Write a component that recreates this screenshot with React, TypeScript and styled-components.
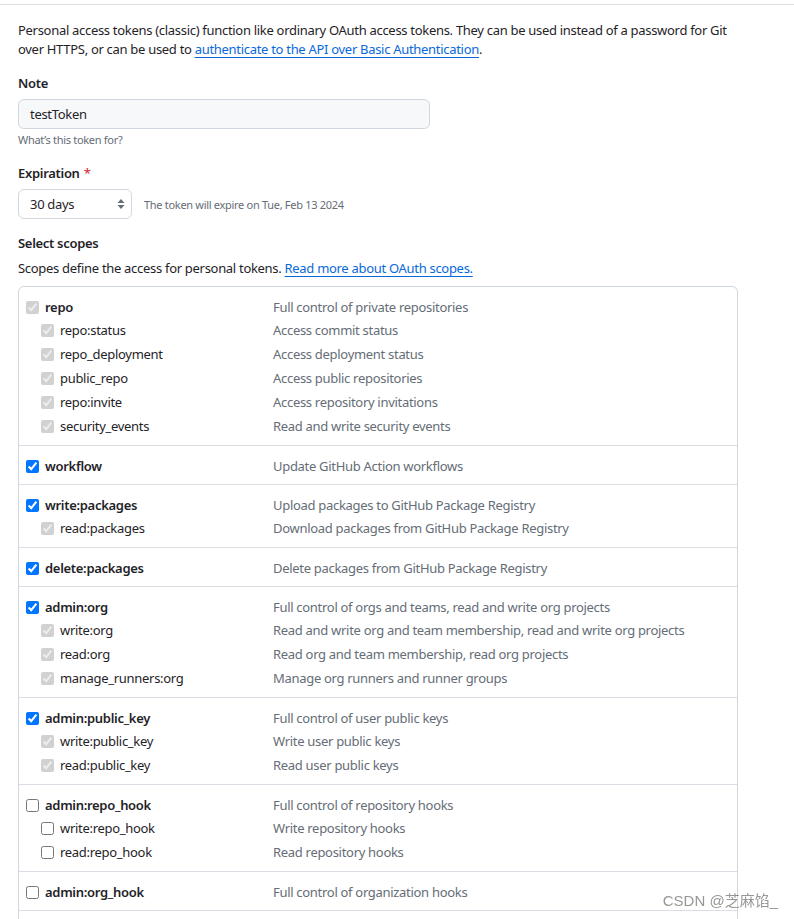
import React from "react";
import styled, { createGlobalStyle } from "styled-components";

const Global = createGlobalStyle`
  html, body { margin: 0; padding: 0; background: #ffffff; }
  body {
    font-family: "Noto Sans", "Liberation Sans", sans-serif;
    font-size: 13px;
    letter-spacing: -0.3px;
    color: #1f2328;
  }
  * { box-sizing: border-box; }
`;

const Rule = styled.div`
  margin-top: 4px;
  border-top: 1px solid #d8dee4;
`;

const Content = styled.div`
  padding: 16px 0 0 18px;
  width: 776px;
`;

const Intro = styled.p`
  margin: 0;
  line-height: 19px;
  width: 730px;
`;

const Link = styled.a`
  color: #0969da;
  text-decoration: underline;
  text-underline-offset: 3px;
`;

const Label = styled.div<{ $gap: number }>`
  margin-top: ${(p) => p.$gap}px;
  font-weight: 600;
  line-height: 20px;
`;

const Required = styled.span`
  color: #d1242f;
  margin-left: 4px;
  font-weight: 400;
`;

const TextInput = styled.input`
  display: block;
  margin-top: 6px;
  width: 412px;
  height: 30px;
  padding: 0 11px;
  border: 1px solid #d0d7de;
  border-radius: 6px;
  background: #f6f8fa;
  font: inherit;
  font-size: 13px;
  letter-spacing: -0.3px;
  color: #1f2328;
  outline: none;
`;

const Note = styled.div`
  margin-top: 2px;
  font-size: 11px;
  line-height: 18px;
  color: #656d76;
`;

const ExpireRow = styled.div`
  margin-top: 6px;
  display: flex;
  align-items: center;
  gap: 12px;
`;

const SelectWrap = styled.div`
  position: relative;
  width: 114px;
  height: 30px;
`;

const Select = styled.select`
  appearance: none;
  width: 100%;
  height: 100%;
  padding: 0 24px 0 11px;
  border: 1px solid #d0d7de;
  border-radius: 6px;
  background: #ffffff;
  font: inherit;
  font-size: 13px;
  letter-spacing: -0.3px;
  color: #1f2328;
  outline: none;
`;

const Arrows = styled.svg`
  position: absolute;
  right: 7px;
  top: 9px;
  pointer-events: none;
`;

const Hint = styled.span`
  font-size: 11px;
  color: #656d76;
`;

const ScopesText = styled.p`
  margin: 5px 0 0;
  line-height: 20px;
`;

const Box = styled.div`
  margin-top: 8px;
  width: 720px;
  border: 1px solid #d0d7de;
  border-radius: 6px;
`;

const Group = styled.div`
  padding: 8px 0 7px 7px;
  border-top: 1px solid #d8dee4;
  &:first-child { border-top: none; }
`;

const Row = styled.label<{ $top?: boolean }>`
  display: grid;
  grid-template-columns: 247px 1fr;
  height: ${(p) => (p.$top ? 23 : 24)}px;
  align-items: center;
`;

const Name = styled.span<{ $top?: boolean }>`
  display: flex;
  align-items: center;
  gap: 6px;
  padding-left: ${(p) => (p.$top ? 0 : 15)}px;
  font-weight: ${(p) => (p.$top ? 600 : 400)};
  color: #1f2328;
`;

const Box13 = styled.input`
  width: 13px;
  height: 13px;
  margin: 1px 0 0 0;
  flex: none;
`;

const Desc = styled.span`
  color: #656d76;
`;

const Watermark = styled.div`
  position: fixed;
  right: 16px;
  bottom: 8px;
  font-family: "Liberation Sans", "Noto Sans CJK SC", sans-serif;
  font-size: 15px;
  line-height: 20px;
  letter-spacing: 0;
  color: rgba(80, 80, 80, 0.6);
  pointer-events: none;
`;

type State = "on" | "implied" | "off";
type Scope = { name: string; desc: string; state: State };
type ScopeGroup = { top: Scope; subs: Scope[] };

const groups: ScopeGroup[] = [
  {
    top: { name: "repo", desc: "Full control of private repositories", state: "implied" },
    subs: [
      { name: "repo:status", desc: "Access commit status", state: "implied" },
      { name: "repo_deployment", desc: "Access deployment status", state: "implied" },
      { name: "public_repo", desc: "Access public repositories", state: "implied" },
      { name: "repo:invite", desc: "Access repository invitations", state: "implied" },
      { name: "security_events", desc: "Read and write security events", state: "implied" },
    ],
  },
  { top: { name: "workflow", desc: "Update GitHub Action workflows", state: "on" }, subs: [] },
  {
    top: { name: "write:packages", desc: "Upload packages to GitHub Package Registry", state: "on" },
    subs: [{ name: "read:packages", desc: "Download packages from GitHub Package Registry", state: "implied" }],
  },
  { top: { name: "delete:packages", desc: "Delete packages from GitHub Package Registry", state: "on" }, subs: [] },
  {
    top: { name: "admin:org", desc: "Full control of orgs and teams, read and write org projects", state: "on" },
    subs: [
      { name: "write:org", desc: "Read and write org and team membership, read and write org projects", state: "implied" },
      { name: "read:org", desc: "Read org and team membership, read org projects", state: "implied" },
      { name: "manage_runners:org", desc: "Manage org runners and runner groups", state: "implied" },
    ],
  },
  {
    top: { name: "admin:public_key", desc: "Full control of user public keys", state: "on" },
    subs: [
      { name: "write:public_key", desc: "Write user public keys", state: "implied" },
      { name: "read:public_key", desc: "Read user public keys", state: "implied" },
    ],
  },
  {
    top: { name: "admin:repo_hook", desc: "Full control of repository hooks", state: "off" },
    subs: [
      { name: "write:repo_hook", desc: "Write repository hooks", state: "off" },
      { name: "read:repo_hook", desc: "Read repository hooks", state: "off" },
    ],
  },
  { top: { name: "admin:org_hook", desc: "Full control of organization hooks", state: "off" }, subs: [] },
  { top: { name: "gist", desc: "Create gists", state: "off" }, subs: [] },
];

const noop = () => {};

function ScopeRow({ scope, top }: { scope: Scope; top?: boolean }) {
  return (
    <Row $top={top}>
      <Name $top={top}>
        <Box13
          type="checkbox"
          checked={scope.state !== "off"}
          disabled={scope.state === "implied"}
          onChange={noop}
        />
        {scope.name}
      </Name>
      <Desc>{scope.desc}</Desc>
    </Row>
  );
}

export default function App() {
  return (
    <>
      <Global />
      <Rule />
      <Content>
        <Intro>
          Personal access tokens (classic) function like ordinary OAuth access tokens. They can be used instead of a password for Git over HTTPS, or can be used to{" "}
          <Link href="#">authenticate to the API over Basic Authentication</Link>.
        </Intro>
        <Label $gap={14}>Note</Label>
        <TextInput defaultValue="testToken" />
        <Note>What’s this token for?</Note>
        <Label $gap={14}>
          Expiration<Required>*</Required>
        </Label>
        <ExpireRow>
          <SelectWrap>
            <Select defaultValue="30">
              <option value="7">7 days</option>
              <option value="30">30 days</option>
              <option value="60">60 days</option>
              <option value="90">90 days</option>
            </Select>
            <Arrows width="8" height="12" viewBox="0 0 8 12">
              <path d="M4 1 L7.5 5 L0.5 5 Z" fill="#656d76" />
              <path d="M4 11 L7.5 7 L0.5 7 Z" fill="#656d76" />
            </Arrows>
          </SelectWrap>
          <Hint>The token will expire on Tue, Feb 13 2024</Hint>
        </ExpireRow>
        <Label $gap={14}>Select scopes</Label>
        <ScopesText>
          Scopes define the access for personal tokens. <Link href="#">Read more about OAuth scopes.</Link>
        </ScopesText>
        <Box>
          {groups.map((g) => (
            <Group key={g.top.name}>
              <ScopeRow scope={g.top} top />
              {g.subs.map((s) => (
                <ScopeRow key={s.name} scope={s} />
              ))}
            </Group>
          ))}
        </Box>
      </Content>
      <Watermark>CSDN @芝麻馅_</Watermark>
    </>
  );
}
